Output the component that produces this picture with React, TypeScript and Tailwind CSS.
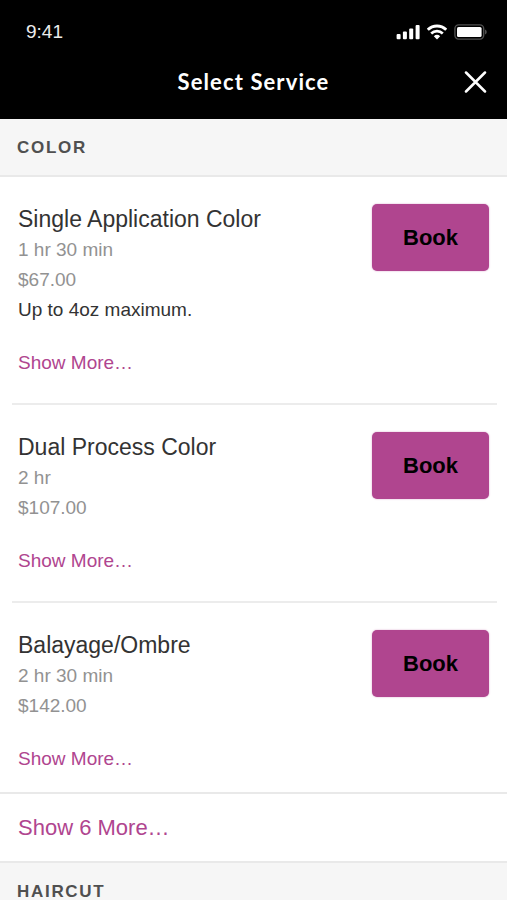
import { useState } from "react";

type Service = {
    name: string;
    duration: string;
    price: string;
    note?: string;
};

const services: Service[] = [
    { name: "Single Application Color", duration: "1 hr 30 min", price: "$67.00", note: "Up to 4oz maximum." },
    { name: "Dual Process Color", duration: "2 hr", price: "$107.00" },
    { name: "Balayage/Ombre", duration: "2 hr 30 min", price: "$142.00" },
];

const StatusBar = () => (
    <div className="flex h-16 items-center justify-between pl-[26px] pr-5 text-white">
        <span className="text-[19px] leading-6 text-[#ececec]">9:41</span>
        <div className="flex items-center gap-[7px]">
            <svg width="24" height="16" viewBox="0 0 24 16" fill="currentColor" aria-hidden="true">
                <rect x="0.6" y="10" width="4" height="5.3" rx="1" />
                <rect x="6.9" y="7.6" width="4" height="7.7" rx="1" />
                <rect x="13.2" y="4.4" width="4" height="10.9" rx="1" />
                <rect x="19.6" y="1" width="4" height="14.3" rx="1" />
            </svg>
            <svg width="20" height="16" viewBox="0 0 20 16" fill="none" stroke="currentColor" aria-hidden="true">
                <path d="M0.8 5.8 A13 13 0 0 1 19.2 5.8" strokeWidth="2.8" />
                <path d="M4.2 9.4 A8.4 8.4 0 0 1 15.8 9.4" strokeWidth="2.7" />
                <path d="M10 15.6 L6.8 12.3 A4.7 4.7 0 0 1 13.2 12.3 Z" fill="currentColor" stroke="none" />
            </svg>
            <svg width="33" height="16" viewBox="0 0 33 16" fill="none" aria-hidden="true">
                <rect x="0.9" y="0.9" width="28.8" height="14.2" rx="3.8" stroke="#505050" strokeWidth="1.4" />
                <rect x="3" y="3" width="24.6" height="10" rx="1.6" fill="#fff" />
                <path d="M31 5.5 C33.3 6.3 33.3 9.7 31 10.5 Z" fill="#505050" />
            </svg>
        </div>
    </div>
);

const SectionTitle = ({ title }: { title: string }) => (
    <h2 className="border-b-2 border-[#e9e9e9] bg-[#f6f6f6] px-[17px] pt-[17px] pb-[15px] text-[17px] leading-6 font-bold tracking-widest text-[#505050] uppercase">
        {title}
    </h2>
);

const ServiceRow = ({ service }: { service: Service }) => (
    <li className="mr-[10px] ml-3 flex items-start justify-between border-b-2 border-[#ececec] pt-[26px] pr-2 pb-[25px] pl-[6px] last:border-b-0 last:pb-[18px]">
        <div className="text-[19px] leading-[30px]">
            <h3 className="text-[23px] leading-8 text-[#333]">{service.name}</h3>
            <p className="text-[#929292]">{service.duration}</p>
            <p className="text-[#929292]">{service.price}</p>
            {service.note && <p className="text-[#333]">{service.note}</p>}
            <button type="button" className="mt-[23px] block cursor-pointer text-[#b0458f]">Show More…</button>
        </div>
        <button
            type="button"
            className="mt-px h-[67px] w-[117px] shrink-0 cursor-pointer rounded-[5px] bg-[#b0458f] text-[22px] leading-8 font-bold text-black shadow-[0_0_2px_#d9a5ca]"
        >
            Book
        </button>
    </li>
);

const App = () => {
    const [open, setOpen] = useState(true);

    if (!open) return null;

    return (
        <div className="h-screen overflow-hidden bg-white font-['Liberation_Sans',Arial,sans-serif]">
            <header className="bg-black text-white">
                <StatusBar />
                <div className="grid grid-cols-[1fr_auto_1fr] px-5 pb-[19px]">
                    <h1 className="col-start-2 font-['Lato',sans-serif] text-[22px] leading-9 font-bold tracking-wider">
                        Select Service
                    </h1>
                    <button
                        type="button"
                        aria-label="Close"
                        onClick={() => setOpen(false)}
                        className="flex cursor-pointer items-center justify-self-end"
                    >
                        <svg width="23" height="23" viewBox="0 0 23 23" fill="none" stroke="currentColor" strokeWidth="2.5" strokeLinecap="round" aria-hidden="true">
                            <path d="M2 1.5 L21 20.5 M21 1.5 L2 20.5" />
                        </svg>
                    </button>
                </div>
            </header>
            <main>
                <section>
                    <SectionTitle title="Color" />
                    <ul>
                        {services.map((service) => (
                            <ServiceRow key={service.name} service={service} />
                        ))}
                    </ul>
                    <button
                        type="button"
                        className="block h-[71px] w-full cursor-pointer border-y-2 border-[#e9e9e9] px-[18px] text-left text-[22px] leading-8 text-[#b0458f]"
                    >
                        Show 6 More…
                    </button>
                </section>
                <section>
                    <SectionTitle title="Haircut" />
                </section>
            </main>
        </div>
    );
};

export default App;
